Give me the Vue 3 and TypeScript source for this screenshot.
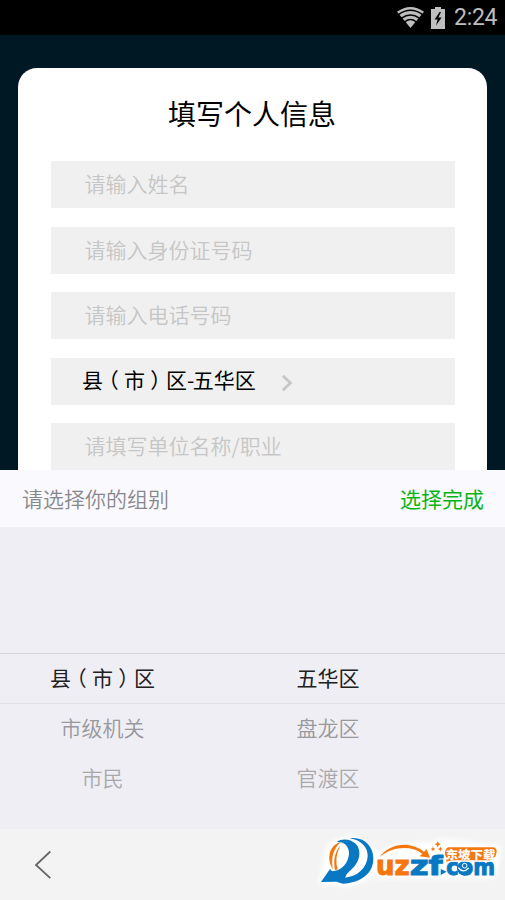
<script setup lang="ts">
interface Column {
  name: string
  items: string[]
}

const fields: string[] = ['请输入姓名', '请输入身份证号码', '请输入电话号码']
const columns: Column[] = [
  { name: 'group', items: ['县（市）区', '市级机关', '市民'] },
  { name: 'district', items: ['五华区', '盘龙区', '官渡区'] },
]

// Full-width brackets and hyphens are set apart so they can be spaced on their own.
function pieces(text: string): string[] {
  return text.split(/([（）-])/).filter((part) => part.length > 0)
}

function mark(part: string): string {
  return part === '（' || part === '）' ? 'bracket' : part === '-' ? 'hyphen' : ''
}
</script>

<template>
  <div class="screen">
    <header class="status">
      <svg class="wifi" viewBox="0 0 27 21">
        <path class="fill" d="M0 4.8Q13.5-4.8 27 4.8L13.5 21Z" />
        <path class="cut" d="M1.4 7.7Q13.5-1 25.6 7.7M4.6 11.2Q13.5 4.6 22.4 11.2M7.8 14.8Q13.5 10.4 19.2 14.8" />
      </svg>
      <svg class="battery" viewBox="0 0 14 22">
        <path class="fill" d="M4 0h6v2h4v20H0V2h4z" />
        <path class="bolt" d="M8.6 5 3.6 12.6h3L5 18.5l5.6-8H7.4L10 5z" />
      </svg>
      <span class="time">2:24</span>
    </header>

    <main class="backdrop">
      <section class="card">
        <h1 class="title">填写个人信息</h1>
        <div v-for="field in fields" :key="field" class="field">{{ field }}</div>
        <div class="field chosen">
          <span><span v-for="(part, i) in pieces('县（市）区-五华区')" :key="i" :class="mark(part)">{{ part }}</span></span>
          <svg class="chevron" viewBox="0 0 12 18"><path d="M1.8 1.8 9.4 9l-7.6 7.2" /></svg>
        </div>
        <div class="field">请填写单位名称/职业</div>
      </section>
    </main>

    <section class="sheet">
      <div class="bar">
        <span class="hint">请选择你的组别</span>
        <span class="done">选择完成</span>
      </div>
      <div class="picker">
        <div v-for="row in 3" :key="row" class="row" :class="'row-' + row">
          <span v-for="column in columns" :key="column.name" class="cell">
            <span v-for="(part, i) in pieces(column.items[row - 1])" :key="i" :class="mark(part)">{{ part }}</span>
          </span>
        </div>
      </div>
    </section>

    <footer class="nav">
      <svg class="back" viewBox="0 0 18 30"><path d="M16.3 1.5 2 15l14.3 13.2" /></svg>
      <svg class="logo" viewBox="0 0 585 225">
        <g class="halo">
          <path d="M35 168 60 60 125 40 190 85 180 150 125 175Z" />
          <path d="M205 90 270 65 370 60 400 50 565 70 550 150 205 152Z" />
        </g>
        <path class="orange" d="M93 50C67 58 56 79 58 104Q60 121 69 134Q58 82 93 50Z" />
        <path class="orange" d="M91 62C73 82 70 107 75 136L83 133Q72 98 91 62Z" />
        <path class="blue" d="M80 50C98 39 122 42 137 56C155 74 153 111 119 138Q109 146 105 158C143 155 171 128 173 94C174 68 155 45 119 40C160 34 189 62 190 99C191 146 153 173 98 176L80 170 33 171 60 132 66 139C94 139 117 112 117 85C117 63 103 50 80 50Z" />
        <path class="orange" d="M208 96C239 56 298 46 342 80L350 73 360 98 329 94 337 86C298 59 247 66 208 96Z" />
        <text class="word orange" x="198" y="150" textLength="101" lengthAdjust="spacingAndGlyphs">uz</text>
        <text class="word blue" x="299" y="150" textLength="99" lengthAdjust="spacingAndGlyphs">zf</text>
        <path class="blue" d="M392 132 410 140 392 150Z" />
        <text class="word small blue" x="409" y="150" textLength="146" lengthAdjust="spacingAndGlyphs">com</text>
        <circle class="blue" cx="463" cy="130" r="22" />
        <path class="smile" d="M445 128Q459 147 476 129" />
        <circle class="eye" cx="464" cy="122" r="7" />
        <path class="orange" d="M383 49l3 6 6 3-6 3-3 6-3-6-6-3 6-3ZM369 64l2 6 6 2-6 2-2 6-2-6-6-2 6-2ZM391 64l2 6 6 2-6 2-2 6-2-6-6-2 6-2Z" />
        <path class="badge" d="M417 65H546Q566 65 561 86Q557 107 538 108H426L405 113 409 100Q400 90 404 78Q407 65 417 65Z" />
        <text class="label" x="407" y="101" textLength="149" lengthAdjust="spacingAndGlyphs">东坡下载</text>
      </svg>
    </footer>
  </div>
</template>

<style>
body {
  margin: 0;
}
</style>

<style scoped>
.screen {
  width: 505px;
  height: 900px;
  overflow: hidden;
  display: flex;
  flex-direction: column;
  font-family: "Noto Sans CJK SC", sans-serif;
  font-size: 21px;
  font-weight: 350;
  background: #efeef4;
}
svg {
  display: block;
  flex: none;
}
.status {
  height: 35px;
  flex: none;
  box-sizing: border-box;
  padding-right: 8px;
  display: flex;
  justify-content: flex-end;
  align-items: center;
  background: #000;
  color: #bebebe;
}
.status .fill {
  fill: #bebebe;
}
.wifi {
  width: 27px;
  height: 21px;
  margin-right: 7px;
}
.cut {
  fill: none;
  stroke: #000;
  stroke-width: 1.5;
}
.battery {
  width: 14px;
  height: 22px;
  margin-right: 9px;
}
.bolt {
  fill: #000;
}
.time {
  font-family: Roboto, sans-serif;
  font-size: 23px;
  font-weight: 400;
  line-height: 37px;
  width: 43px;
  letter-spacing: -0.3px;
  white-space: nowrap;
}
.backdrop {
  height: 435px;
  flex: none;
  box-sizing: border-box;
  padding: 33px 18px 0;
  overflow: hidden;
  background: #001724;
}
.card {
  height: 402px;
  box-sizing: border-box;
  padding: 0 32px 0 33px;
  overflow: hidden;
  border-radius: 19px 19px 0 0;
  background: #fff;
}
.title {
  margin: 0 2px 0 0;
  height: 93px;
  line-height: 91px;
  text-align: center;
  font-size: 28px;
  font-weight: 400;
  color: #000;
}
.field {
  height: 47px;
  margin-bottom: 18.6px;
  padding-left: 33.5px;
  line-height: 44px;
  background: #f0f0f0;
  color: #c6c6c6;
  white-space: nowrap;
}
.chosen {
  display: flex;
  align-items: flex-start;
  padding-left: 31px;
  line-height: 43px;
  color: #000;
  font-weight: 400;
}
.bracket {
  font-feature-settings: "halt";
  margin: 0 5.25px;
}
.hyphen {
  margin-right: -1.5px;
}
.chevron {
  width: 12px;
  height: 18px;
  margin: 16px 0 0 25px;
  fill: none;
  stroke: #c6c6c9;
  stroke-width: 2.8;
}
.sheet {
  height: 359px;
  flex: none;
}
.bar {
  height: 57px;
  padding: 0 21px 0 22px;
  display: flex;
  justify-content: space-between;
  line-height: 56px;
  background: #faf9fe;
}
.hint {
  color: #88888c;
}
.done {
  color: #0ab414;
  font-weight: 400;
}
.picker {
  padding-top: 126px;
}
.row {
  display: grid;
  grid-template-columns: 205px 246px;
  height: 50.5px;
  line-height: 47px;
  text-align: center;
}
.row-1 {
  height: 48.5px;
  line-height: 46px;
  border-top: 1px solid #d7d6dc;
  border-bottom: 1px solid #dfdee4;
  color: #202022;
  font-weight: 400;
}
.row-2 {
  color: #99999c;
}
.row-3 {
  color: #a9a9ac;
}
.nav {
  height: 71px;
  flex: none;
  display: flex;
  justify-content: space-between;
  align-items: flex-start;
  background: #f3f3f3;
}
.back {
  width: 18px;
  height: 30px;
  margin: 21px 0 0 34px;
  fill: none;
  stroke: #666;
  stroke-width: 1.8;
}
.logo {
  width: 195px;
  height: 75px;
  margin-top: -4px;
}
.halo {
  fill: #fff;
  stroke: #fff;
  stroke-width: 18;
  stroke-linejoin: round;
  filter: blur(8px);
}
.orange {
  fill: #f5770d;
}
.blue {
  fill: #0878c3;
}
.word {
  font-family: "DejaVu Sans", sans-serif;
  font-size: 80px;
  font-weight: 700;
  stroke-width: 3;
}
.word.small {
  font-size: 70px;
}
.word.orange {
  stroke: #f5770d;
}
.word.blue {
  stroke: #0878c3;
}
.smile {
  fill: none;
  stroke: #fff;
  stroke-width: 4;
}
.eye {
  fill: #0878c3;
  stroke: #fff;
  stroke-width: 3;
}
.badge {
  fill: #f5770d;
  stroke: #fff;
  stroke-width: 4;
}
.label {
  font-size: 35px;
  font-weight: 900;
  fill: #fff;
}
</style>
